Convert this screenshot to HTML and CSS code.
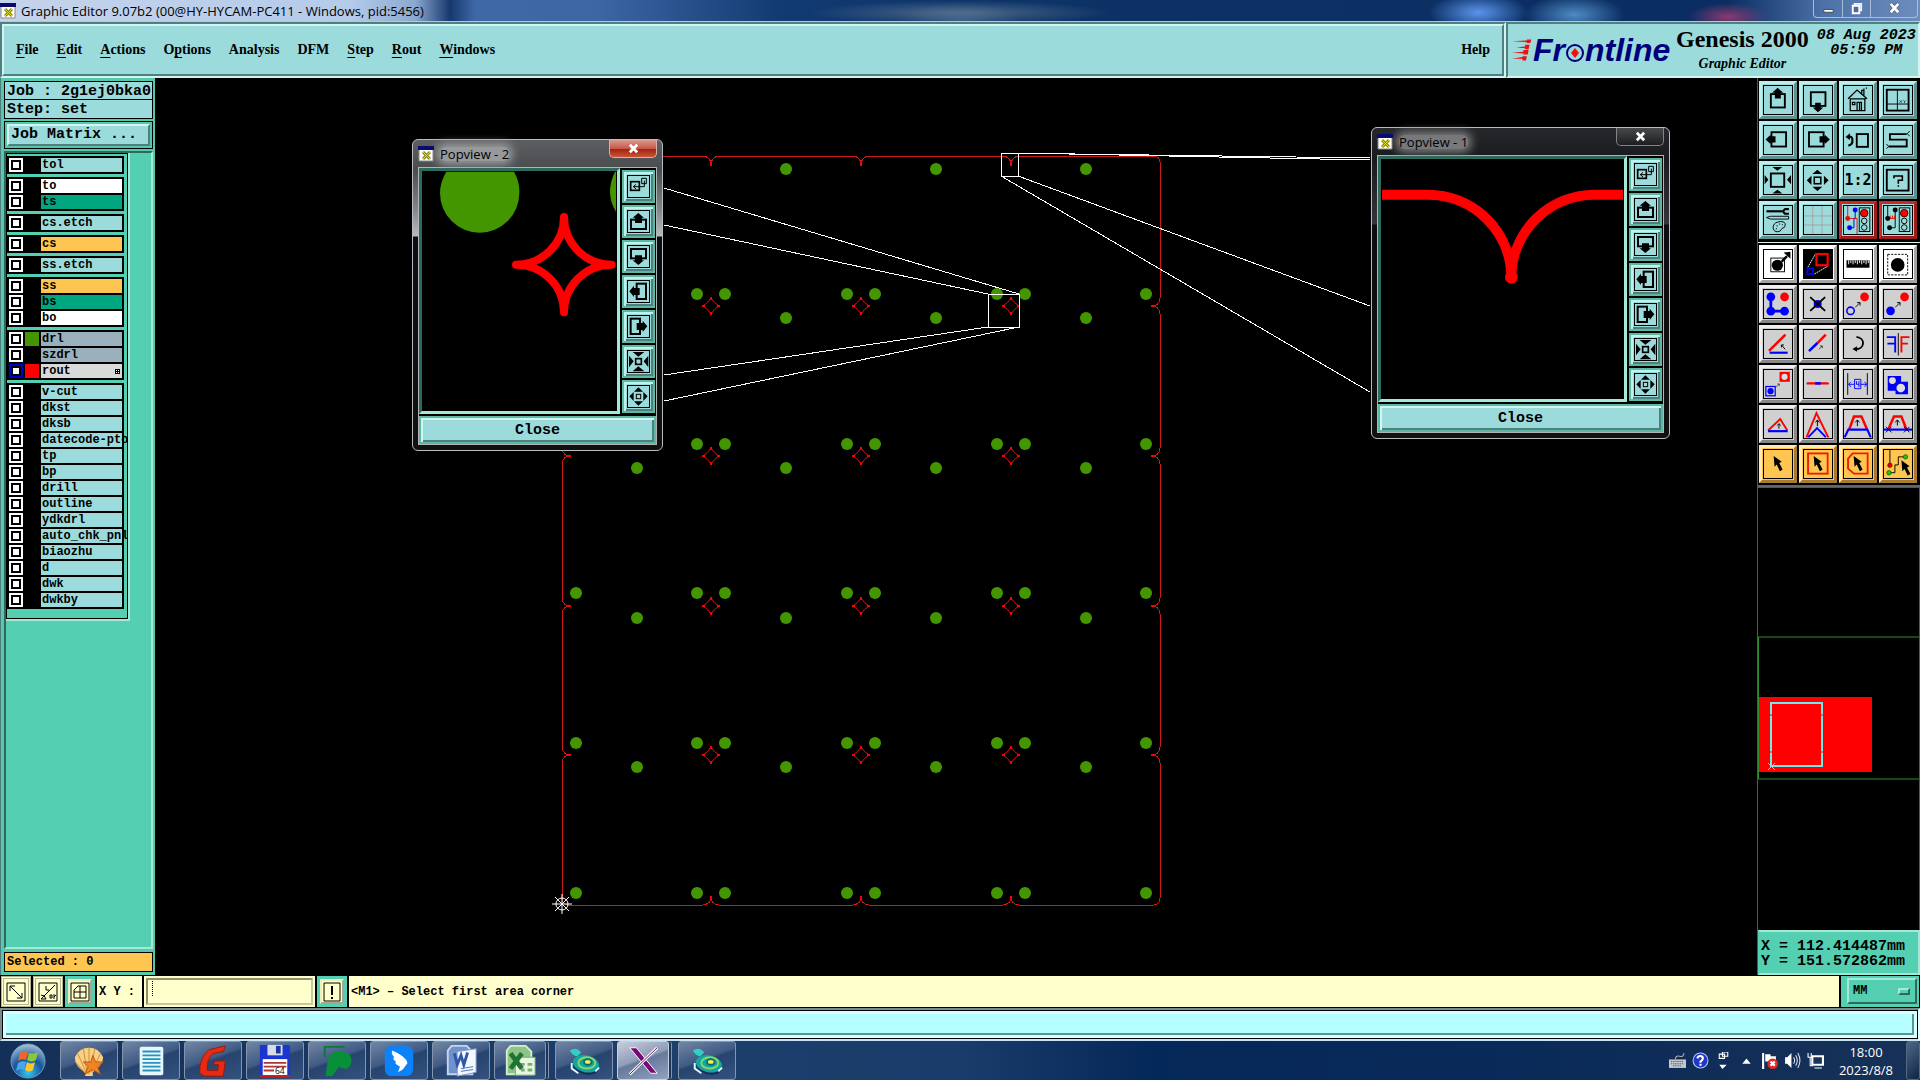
FILE: index.html
```html
<!DOCTYPE html>
<html lang="en">

<head>
    <meta charset="UTF-8">
    <meta name="viewport" content="width=device-width, initial-scale=1.0">
    <title>Graphic Editor 9.07b2</title>
    <link rel="stylesheet" href="styles.css">
</head>

<body>
    <!-- Icon sprite -->
    <svg class="sprite" aria-hidden="true">
        <symbol id="xwin" viewBox="0 0 16 16">
            <path d="M1 1H15V15H1Z" fill="#fff" stroke="#888" />
            <path d="M0 0H16V4H0Z" fill="#0a0a70" />
            <path d="M5 6L12 13M12 6L5 13" stroke="#8a8a10" stroke-width="3" />
            <path d="M5 6L12 13M12 6L5 13" stroke="#e0dc20" stroke-width="1" />
        </symbol>
        <symbol id="cursor" viewBox="0 0 90 90">
            <path d="M31 19L57 38L49 42L60 63L51 68L41 47L34 54Z" />
        </symbol>
        <symbol id="mini-arrow" viewBox="0 0 20 20">
            <path d="M2 18L16 4M7 4H16V13" fill="none" stroke="#000" stroke-width="2.5" />
        </symbol>
        <symbol id="up" viewBox="0 0 90 90">
            <rect x="22" y="26" width="45" height="43" fill="none" stroke="#000" stroke-width="6" />
            <path d="M44 6L62 22H54V40H35V22H26Z" />
        </symbol>
        <symbol id="down" viewBox="0 0 90 90">
            <rect x="22" y="20" width="47" height="44" fill="none" stroke="#000" stroke-width="6" />
            <path d="M45 84L62 69H54V54H36V69H28Z" />
        </symbol>
        <symbol id="left" viewBox="0 0 90 90">
            <rect x="24" y="20" width="47" height="46" fill="none" stroke="#000" stroke-width="6" />
            <path d="M5 43L21 28V33H37V53H21V58Z" />
        </symbol>
        <symbol id="right" viewBox="0 0 90 90">
            <rect x="16" y="20" width="47" height="46" fill="none" stroke="#000" stroke-width="6" />
            <path d="M83 43L67 28V33H50V53H67V58Z" />
        </symbol>
        <symbol id="shrink" viewBox="0 0 90 90">
            <rect x="22" y="24" width="43" height="43" fill="none" stroke="#000" stroke-width="6" />
            <path d="M27 3H59L43 15ZM27 88H59L43 76ZM2 29V59L14 44ZM87 29V59L74 44Z" />
        </symbol>
        <symbol id="grow" viewBox="0 0 90 90">
            <rect x="33" y="36" width="21" height="21" fill="none" stroke="#000" stroke-width="5" />
            <path d="M43 12L59 26H27ZM43 80L59 67H27ZM9 46L24 31V61ZM79 46L64 31V61Z" />
        </symbol>
        <symbol id="p-zoom" viewBox="0 0 63 63">
            <rect x="8" y="17" width="26" height="26" fill="none" stroke="#000" stroke-width="5" />
            <path d="M41 7H55V23H41ZM49 14V32H16M24 25L16 32L24 39" fill="none" stroke="#000" stroke-width="3" />
        </symbol>
        <symbol id="p-up" viewBox="0 0 63 63">
            <rect x="9" y="26" width="45" height="28" fill="none" stroke="#000" stroke-width="6" />
            <path d="M31 6L48 20H42V36H21V20H14Z" />
        </symbol>
        <symbol id="p-down" viewBox="0 0 63 63">
            <rect x="9" y="9" width="45" height="28" fill="none" stroke="#000" stroke-width="6" />
            <path d="M31 57L48 43H42V28H21V43H14Z" />
        </symbol>
        <symbol id="p-left" viewBox="0 0 63 63">
            <rect x="26" y="8" width="28" height="46" fill="none" stroke="#000" stroke-width="6" />
            <path d="M4 31L18 14V21H35V42H18V48Z" />
        </symbol>
        <symbol id="p-right" viewBox="0 0 63 63">
            <rect x="8" y="8" width="28" height="46" fill="none" stroke="#000" stroke-width="6" />
            <path d="M58 31L44 14V21H26V42H44V48Z" />
        </symbol>
        <symbol id="p-shrink" viewBox="0 0 63 63">
            <rect x="23" y="23" width="17" height="17" fill="none" stroke="#000" stroke-width="5" />
            <path d="M14 3H49L31 17ZM14 61H49L31 46ZM3 14V49L17 31ZM61 14V49L47 31Z" />
        </symbol>
        <symbol id="p-grow" viewBox="0 0 63 63">
            <rect x="25" y="25" width="13" height="13" fill="none" stroke="#000" stroke-width="3" />
            <path d="M31 4L45 17H18ZM31 59L45 46H18ZM4 31L17 18V45ZM59 31L46 18V45Z" />
        </symbol>
        <symbol id="star" viewBox="-10 -10 20 20">
            <path d="M0 -8Q3 -3 8 0Q3 3 0 8Q-3 3 -8 0Q-3 -3 0 -8Z" fill="none" stroke="#dc1414" />
            <path d="M-1 -9H1V-6H-1ZM-1 6H1V9H-1ZM-9 -1H-6V1H-9ZM6 -1H9V1H6Z" fill="#f00" />
        </symbol>
        <symbol id="flying" viewBox="0 0 36 36">
            <ellipse cx="20" cy="23" rx="14" ry="9" fill="#1c2858" transform="rotate(15 20 23)" />
            <ellipse cx="20" cy="21" rx="14" ry="9" fill="#11a6a0" transform="rotate(12 20 21)" />
            <ellipse cx="21" cy="20" rx="9" ry="6" fill="none" stroke="#8bd46a" stroke-width="2" />
            <ellipse cx="22" cy="19" rx="4" ry="3" fill="#f0ee4c" stroke="#0a6c70" stroke-width="2" />
            <path d="M3 7Q10 2 15 9L11 13Q6 13 3 7Z" fill="#32cfc8" />
            <path d="M5 20V26L12 31M30 29L34 25" fill="none" stroke="#dff" stroke-width="2" />
        </symbol>
    </svg>

    <!-- Window title -->
    <div class="titlebar">
        <svg class="title-icon"><use href="#xwin" /></svg>
        <span class="title-text">Graphic Editor 9.07b2 (00@HY-HYCAM-PC411 - Windows, pid:5456)</span>
        <div class="window-buttons">
            <button aria-label="Minimize"><svg viewBox="0 0 16 16"><path d="M3 9H13V12H3Z" fill="#fff" stroke="#445" /></svg></button>
            <button aria-label="Restore"><svg viewBox="0 0 16 16"><path d="M6 3H13V10H6Z" fill="none" stroke="#eef" stroke-width="2" /><path d="M4 5H11V13H4Z" fill="#556a90" stroke="#fff" stroke-width="2" /></svg></button>
            <button class="wide" aria-label="Close"><svg viewBox="0 0 16 16"><path d="M4 3L12 12M12 3L4 12" stroke="#445" stroke-width="4" /><path d="M4 3L12 12M12 3L4 12" stroke="#fff" stroke-width="3" /></svg></button>
        </div>
    </div>

    <!-- Menu bar -->
    <header class="header">
        <div class="sunken menu-frame">
            <nav class="raised menu">
                <a href="#"><u>F</u>ile</a>
                <a href="#"><u>E</u>dit</a>
                <a href="#"><u>A</u>ctions</a>
                <a href="#">O<u>p</u>tions</a>
                <a href="#">Analysis</a>
                <a href="#">DFM</a>
                <a href="#"><u>S</u>tep</a>
                <a href="#"><u>R</u>out</a>
                <a href="#"><u>W</u>indows</a>
                <a href="#" class="help">Help</a>
            </nav>
        </div>
        <div class="sunken brand">
            <div class="logo">
                <svg class="logo-speed" viewBox="0 0 24 24"><path d="M0 2L17 1V0H22L21 4H17V3ZM5 9L15 8V6H20L19 11H15V10ZM0 15L13 14V12H19L18 17H13V16ZM0 22L12 20V19H17L16 24H12V22Z" fill="#f01010" /></svg>
                <span>Fr</span>
                <svg class="logo-o" viewBox="0 0 20 20"><circle cx="10" cy="10" r="8" fill="none" stroke="#00007c" stroke-width="2" /><path d="M10 5L14 10L10 15L6 10Z" fill="#f01010" /></svg>
                <span>ntline</span>
            </div>
            <div class="product">
                <h1>Genesis 2000</h1>
                <p>Graphic Editor</p>
            </div>
            <div class="clock">08 Aug 2023<br>05:59 PM</div>
        </div>
    </header>

    <main class="workspace">
        <!-- Layers -->
        <aside class="layers-panel">
            <div class="job-box">Job : 2g1ej0bka0</div>
            <div class="job-box step-box">Step: set</div>
            <div class="matrix-frame"><button class="matrix-btn">Job Matrix ...</button></div>
            <div class="layers-scroll">
                <div class="layers">
                    <div class="group">
                        <label><input type="checkbox"><i></i><span>tol</span></label>
                    </div>
                    <div class="group">
                        <label><input type="checkbox"><i></i><span class="white">to</span></label>
                        <label><input type="checkbox"><i></i><span class="green">ts</span></label>
                    </div>
                    <div class="group">
                        <label><input type="checkbox"><i></i><span>cs.etch</span></label>
                    </div>
                    <div class="group">
                        <label><input type="checkbox"><i></i><span class="gold">cs</span></label>
                    </div>
                    <div class="group">
                        <label><input type="checkbox"><i></i><span>ss.etch</span></label>
                    </div>
                    <div class="group">
                        <label><input type="checkbox"><i></i><span class="gold">ss</span></label>
                        <label><input type="checkbox"><i></i><span class="green">bs</span></label>
                        <label><input type="checkbox"><i></i><span class="white">bo</span></label>
                    </div>
                    <div class="group">
                        <label><input type="checkbox"><i class="drl"></i><span class="gray">drl</span></label>
                        <label><input type="checkbox"><i></i><span class="gray">szdrl</span></label>
                        <label><input type="checkbox" checked><i class="rout"></i><span class="silver">rout<svg class="work-mark" viewBox="0 0 5 5"><path d="M0 0H5V5H0Z" /><path d="M1 1H2V2H1ZM3 1H4V2H3ZM1 3H2V4H1ZM3 3H4V4H3Z" fill="#fff" /></svg></span></label>
                    </div>
                    <div class="group">
                        <label><input type="checkbox"><i></i><span>v-cut</span></label>
                        <label><input type="checkbox"><i></i><span>dkst</span></label>
                        <label><input type="checkbox"><i></i><span>dksb</span></label>
                        <label><input type="checkbox"><i></i><span>datecode-pto</span></label>
                        <label><input type="checkbox"><i></i><span>tp</span></label>
                        <label><input type="checkbox"><i></i><span>bp</span></label>
                        <label><input type="checkbox"><i></i><span>drill</span></label>
                        <label><input type="checkbox"><i></i><span>outline</span></label>
                        <label><input type="checkbox"><i></i><span>ydkdrl</span></label>
                        <label><input type="checkbox"><i></i><span>auto_chk_pnl</span></label>
                        <label><input type="checkbox"><i></i><span>biaozhu</span></label>
                        <label><input type="checkbox"><i></i><span>d</span></label>
                        <label><input type="checkbox"><i></i><span>dwk</span></label>
                        <label><input type="checkbox"><i></i><span>dwkby</span></label>
                    </div>
                </div>
            </div>
            <div class="selected">Selected : 0</div>
        </aside>

        <!-- Drawing area -->
        <section class="canvas">
            <svg class="board" viewBox="155 78 1602 897" preserveAspectRatio="xMinYMin meet">
                <defs>
                    <g id="vpair"><circle cx="-14" r="6" /><circle cx="14" r="6" /></g>
                    <g id="pair-row">
                        <circle cx="576" r="6" /><use href="#vpair" x="711" /><use href="#vpair" x="861" /><use href="#vpair" x="1011" /><circle cx="1146" r="6" />
                    </g>
                    <g id="single-row"><circle cx="637" r="6" /><circle cx="786" r="6" /><circle cx="936" r="6" /><circle cx="1086" r="6" /></g>
                    <g id="star-row">
                        <use href="#star" x="701" y="-10" width="20" height="20" />
                        <use href="#star" x="851" y="-10" width="20" height="20" />
                        <use href="#star" x="1001" y="-10" width="20" height="20" />
                    </g>
                </defs>
                <g fill="#439600">
                    <use href="#single-row" y="169" />
                    <use href="#pair-row" y="294" />
                    <use href="#single-row" y="318" />
                    <use href="#pair-row" y="444" />
                    <use href="#single-row" y="468" />
                    <use href="#pair-row" y="593" />
                    <use href="#single-row" y="618" />
                    <use href="#pair-row" y="743" />
                    <use href="#single-row" y="767" />
                    <use href="#pair-row" y="893" />
                </g>
                <path fill="none" stroke="#c81818" shape-rendering="crispEdges" d="M568 156H703Q711 157 711 165Q711 157 719 156H853Q861 157 861 165Q861 157 869 156H1003Q1011 157 1011 165Q1011 157 1019 156H1154Q1160 157 1160 162
                    V298Q1159 306 1152 306Q1159 306 1160 314V448Q1159 456 1152 456Q1159 456 1160 464V598Q1159 606 1152 606Q1159 606 1160 614V747Q1159 755 1152 755Q1159 755 1160 763V898
                    Q1160 904 1154 905H1019Q1011 904 1011 897Q1011 904 1003 905H869Q861 904 861 897Q861 904 853 905H719Q711 904 711 897Q711 904 703 905H568Q562 904 562 898
                    V763Q563 755 570 755Q563 755 562 747V614Q563 606 570 606Q563 606 562 598V464Q563 456 570 456Q563 456 562 448V314Q563 306 570 306Q563 306 562 298V162Q562 157 568 156Z" />
                <path fill="#f00" d="M710 163H712V166H710ZM860 163H862V166H860ZM1010 163H1012V166H1010ZM710 896H712V899H710ZM860 896H862V899H860ZM1010 896H1012V899H1010ZM1151 305H1154V307H1151ZM1151 455H1154V457H1151ZM1151 605H1154V607H1151ZM1151 754H1154V756H1151ZM568 605H571V607H568ZM568 754H571V756H568ZM568 455H571V457H568Z" />
                <use href="#star-row" y="306" />
                <use href="#star-row" y="456" />
                <use href="#star-row" y="606" />
                <use href="#star-row" y="755" />
                <g fill="none" stroke="#fff" shape-rendering="crispEdges">
                    <path d="M1001 153H1018V176H1001ZM988 294H1019V327H988Z" />
                    <path d="M1018 153L1370 160M1001 153L1370 158M1018 176L1370 306M1001 176L1370 392" />
                    <path d="M664 188L1019 294M664 225L988 294M664 375L988 327M664 401L1019 327" />
                </g>
                <g fill="none" stroke="#fff">
                    <circle cx="562" cy="904" r="6" />
                    <path d="M552 904H572M562 894V914M555 897L569 911M569 897L555 911" />
                </g>
            </svg>

            <div class="popview popview-2">
                <div class="pop-title">
                    <svg class="title-icon"><use href="#xwin" /></svg>
                    <span>Popview - 2</span>
                    <button class="pop-x" aria-label="Close window"><svg viewBox="0 0 12 12"><path d="M2 2L10 10M10 2L2 10" stroke="#fff" stroke-width="3" /></svg></button>
                </div>
                <div class="pop-body">
                    <div class="pop-view">
                        <svg viewBox="0 0 585 720">
                            <g fill="#439600"><path d="M73 2H276Q294 34 292 66A119 119 0 0 1 54 66Q54 34 73 2Z" /><path d="M582 2H579Q563 34 564 66Q566 98 582 122Z" /></g>
                            <path d="M426 138A143 143 0 0 0 569 281A143 143 0 0 0 426 424A143 143 0 0 0 282 281A143 143 0 0 0 426 138Z" fill="none" stroke="#f00" stroke-width="24" stroke-linejoin="round" />
                        </svg>
                    </div>
                    <div class="pop-tools">
                        <button aria-label="Set area"><svg><use href="#p-zoom" /></svg></button>
                        <button aria-label="Pan up"><svg><use href="#p-up" /></svg></button>
                        <button aria-label="Pan down"><svg><use href="#p-down" /></svg></button>
                        <button aria-label="Pan left"><svg><use href="#p-left" /></svg></button>
                        <button aria-label="Pan right"><svg><use href="#p-right" /></svg></button>
                        <button aria-label="Zoom in"><svg><use href="#p-shrink" /></svg></button>
                        <button aria-label="Zoom out"><svg><use href="#p-grow" /></svg></button>
                    </div>
                    <button class="pop-close">Close</button>
                </div>
            </div>

            <div class="popview popview-1">
                <div class="pop-title">
                    <svg class="title-icon"><use href="#xwin" /></svg>
                    <span>Popview - 1</span>
                    <button class="pop-x" aria-label="Close window"><svg viewBox="0 0 12 12"><path d="M2 2L10 10M10 2L2 10" stroke="#fff" stroke-width="3" /></svg></button>
                </div>
                <div class="pop-body">
                    <div class="pop-view">
                        <svg viewBox="0 0 729 720">
                            <path d="M3 107H141A250 250 0 0 1 391 355A250 250 0 0 1 641 107H726" fill="none" stroke="#f00" stroke-width="30" stroke-linejoin="round" />
                            <circle cx="391" cy="355" r="19" fill="#f00" />
                        </svg>
                    </div>
                    <div class="pop-tools">
                        <button aria-label="Set area"><svg><use href="#p-zoom" /></svg></button>
                        <button aria-label="Pan up"><svg><use href="#p-up" /></svg></button>
                        <button aria-label="Pan down"><svg><use href="#p-down" /></svg></button>
                        <button aria-label="Pan left"><svg><use href="#p-left" /></svg></button>
                        <button aria-label="Pan right"><svg><use href="#p-right" /></svg></button>
                        <button aria-label="Zoom in"><svg><use href="#p-shrink" /></svg></button>
                        <button aria-label="Zoom out"><svg><use href="#p-grow" /></svg></button>
                    </div>
                    <button class="pop-close">Close</button>
                </div>
            </div>
        </section>

        <!-- Tools -->
        <aside class="tools-panel">
            <div class="tools">
                <button aria-label="Pan up"><svg><use href="#up" /></svg></button>
                <button aria-label="Pan down"><svg><use href="#down" /></svg></button>
                <button aria-label="Home"><svg viewBox="0 0 90 90"><path d="M13 41L42 13L74 41M20 40V79H67V40M18 41H70M42 79V53H56V79M27 53H35V60H27ZM50 53V79M57 26V14H64V32M62 10H66M70 7H74" fill="none" stroke="#000" stroke-width="4" /></svg></button>
                <button aria-label="Quadrants"><svg viewBox="0 0 90 90"><rect x="9" y="12" width="70" height="67" fill="none" stroke="#000" stroke-width="6" /><path d="M43 12V79M9 58H79" stroke="#000" stroke-width="3" /><path d="M50 46L58 54M58 46L50 54M62 46L66 50L70 46M66 50V55" fill="none" stroke="#000" stroke-width="2" /></svg></button>

                <button aria-label="Pan left"><svg><use href="#left" /></svg></button>
                <button aria-label="Pan right"><svg><use href="#right" /></svg></button>
                <button aria-label="Previous view"><svg viewBox="0 0 90 90"><rect x="41" y="26" width="36" height="41" fill="none" stroke="#000" stroke-width="6" /><path d="M14 34Q28 32 27 46Q28 60 14 63" fill="none" stroke="#000" stroke-width="7" /><path d="M5 35L19 23V45Z" /></svg></button>
                <button aria-label="Serpentine"><svg viewBox="0 0 90 90"><path d="M73 26H19V44H73V66H15" fill="none" stroke="#000" stroke-width="6" /><path d="M73 26L83 16M76 26L83 33M15 66L8 58M15 66L8 73" stroke="#000" stroke-width="3" /></svg></button>

                <button aria-label="Zoom in"><svg><use href="#shrink" /></svg></button>
                <button aria-label="Zoom out"><svg><use href="#grow" /></svg></button>
                <button class="ratio">1:2</button>
                <button aria-label="Help"><svg viewBox="0 0 90 90"><rect x="9" y="12" width="70" height="67" fill="none" stroke="#000" stroke-width="6" /><path d="M32 40V32H59V46H46V57M46 62V67" fill="none" stroke="#000" stroke-width="5" /></svg></button>

                <button aria-label="Setup"><svg viewBox="0 0 90 90"><path d="M8 17H60" stroke="#000" stroke-width="7" /><path d="M80 10H68Q56 17 68 25H80" fill="none" stroke="#000" stroke-width="7" /><path d="M8 37L21 33H79V42H21Z" fill="none" stroke="#000" stroke-width="3" /><path d="M30 64Q34 51 54 50Q70 50 68 62Q68 70 58 72Q52 85 42 83Q26 80 30 64ZM40 64H44M48 58H52M58 60H61M38 73H42" fill="none" stroke="#000" stroke-width="3" /></svg></button>
                <button aria-label="Grid"><svg viewBox="0 0 90 90"><path d="M28 0V90M58 0V90M0 32H90M0 61H90" stroke="#a8a0a4" stroke-width="3" /></svg></button>
                <button class="red" aria-label="Net analysis"><svg viewBox="0 0 90 90"><path d="M12 0V40H42V90" fill="none" stroke="#e01010" stroke-width="3" /><path d="M36 13V40M32 40V70H18" fill="none" stroke="#00c" stroke-width="3" /><circle cx="12" cy="40" r="8" fill="#e01010" /><circle cx="36" cy="13" r="8" fill="#00f" /><circle cx="18" cy="70" r="8" fill="#00f" /><rect x="49" y="6" width="34" height="76" fill="none" stroke="#000" stroke-width="3" /><circle cx="65" cy="23" r="12" fill="#f00" stroke="#300" stroke-width="3" /><circle cx="65" cy="48" r="9" fill="none" stroke="#000" stroke-width="3" /><circle cx="65" cy="69" r="9" fill="none" stroke="#000" stroke-width="3" /></svg></button>
                <button class="red" aria-label="Short analysis"><svg viewBox="0 0 90 90"><path d="M12 0V40M36 13V70H18" fill="none" stroke="#000" stroke-width="3" /><path d="M12 40H36M20 40V31M27 40V31M34 40V31" stroke="#e01010" stroke-width="3" /><circle cx="12" cy="40" r="8" /><circle cx="36" cy="13" r="8" /><circle cx="18" cy="70" r="8" /><rect x="49" y="6" width="34" height="76" fill="none" stroke="#000" stroke-width="3" /><circle cx="65" cy="23" r="12" fill="#f00" stroke="#300" stroke-width="3" /><circle cx="65" cy="48" r="9" fill="none" stroke="#000" stroke-width="3" /><circle cx="65" cy="69" r="9" fill="none" stroke="#000" stroke-width="3" /></svg></button>
            </div>
            <div class="tools edit-tools">
                <button class="white" aria-label="Feature"><svg viewBox="0 0 90 90"><rect x="22" y="26" width="44" height="44" fill="none" stroke="#000" stroke-width="3" /><circle cx="43" cy="49" r="18" /><path d="M57 37L74 20" stroke="#000" stroke-width="8" /><path d="M85 6V28L63 8Z" /></svg></button>
                <button class="white" aria-label="Popview"><svg viewBox="0 0 90 90"><path d="M0 0H90V90H0Z" /><path d="M36 14L12 56M76 52L32 78" stroke="#fff" stroke-width="3" stroke-dasharray="5 2" /><rect x="40" y="13" width="36" height="36" fill="none" stroke="#f00" stroke-width="7" /><rect x="11" y="59" width="18" height="18" fill="none" stroke="#00f" stroke-width="6" /></svg></button>
                <button class="white" aria-label="Measure"><svg viewBox="0 0 90 90"><path d="M8 33H82V57H8Z" /><path d="M15 33V46M22 33V42M29 33V46M36 33V42M43 33V46M50 33V42M57 33V46M64 33V42M71 33V46M78 33V42" stroke="#fff" stroke-width="3" /></svg></button>
                <button class="white" aria-label="Select"><svg viewBox="0 0 90 90"><rect x="12" y="14" width="64" height="66" fill="none" stroke="#000" stroke-width="3" stroke-dasharray="7 4" /><circle cx="44" cy="48" r="22" /></svg></button>

                <button class="gray" aria-label="Add line"><svg viewBox="0 0 90 90"><path d="M22 22V68H66" fill="none" stroke="#00f" stroke-width="9" /><circle cx="22" cy="22" r="14" fill="#00f" /><circle cx="22" cy="68" r="14" fill="#00f" /><circle cx="66" cy="68" r="14" fill="#00f" /><circle cx="66" cy="22" r="14" fill="#f00" /></svg></button>
                <button class="gray" aria-label="Delete"><svg viewBox="0 0 90 90"><circle cx="44" cy="45" r="13" fill="#00e" /><path d="M20 23L68 67M68 23L20 67" stroke="#000" stroke-width="6" /></svg></button>
                <button class="gray" aria-label="Move"><svg viewBox="0 0 90 90"><circle cx="21" cy="67" r="12" fill="none" stroke="#00f" stroke-width="5" /><circle cx="66" cy="22" r="14" fill="#f00" /><use href="#mini-arrow" x="34" y="36" width="22" height="22" /></svg></button>
                <button class="gray" aria-label="Copy"><svg viewBox="0 0 90 90"><circle cx="21" cy="67" r="14" fill="#00f" /><circle cx="66" cy="22" r="14" fill="#f00" /><use href="#mini-arrow" x="34" y="36" width="22" height="22" /></svg></button>

                <button class="gray" aria-label="Rotate line"><svg viewBox="0 0 90 90"><path d="M16 67L69 15" stroke="#f00" stroke-width="8" /><path d="M18 73H76" stroke="#00f" stroke-width="7" /><path d="M68 62L56 48M56 56V48H64" fill="none" stroke="#000" stroke-width="3" /></svg></button>
                <button class="gray" aria-label="Extend line"><svg viewBox="0 0 90 90"><path d="M16 68L44 41" stroke="#00f" stroke-width="8" /><path d="M44 41L70 15" stroke="#f00" stroke-width="8" /><use href="#mini-arrow" x="46" y="48" width="16" height="16" /></svg></button>
                <button class="gray" aria-label="Rotate"><svg viewBox="0 0 90 90"><path d="M40 22C70 26 68 62 36 62" fill="none" stroke="#000" stroke-width="6" /><path d="M27 61L42 52V70Z" /></svg></button>
                <button class="gray" aria-label="Mirror"><svg viewBox="0 0 90 90"><path d="M9 23H36V72M11 44H36" fill="none" stroke="#00f" stroke-width="6" /><path d="M46 10V82" stroke="#000" stroke-width="3" /><path d="M82 23H56V72M56 44H77" fill="none" stroke="#f00" stroke-width="6" /></svg></button>

                <button class="gray" aria-label="Resize"><svg viewBox="0 0 90 90"><rect x="6" y="53" width="30" height="30" fill="none" stroke="#00f" stroke-width="4" /><circle cx="21" cy="68" r="10" fill="#00f" /><path d="M50 6H83V38H50Z" fill="#f00" /><circle cx="66" cy="22" r="10" fill="#ddd" /><use href="#mini-arrow" x="38" y="42" width="14" height="14" /></svg></button>
                <button class="gray" aria-label="Break line"><svg viewBox="0 0 90 90"><path d="M12 43H76" stroke="#f00" stroke-width="8" stroke-linecap="round" /><path d="M36 43H54" stroke="#00f" stroke-width="8" /></svg></button>
                <button class="gray" aria-label="Stretch"><svg viewBox="0 0 90 90"><path d="M12 10V80M75 10V80" stroke="#000" stroke-width="3" /><path d="M15 46H34V30H54V60H34V46M54 46H73M22 38L15 46L22 54M66 38L73 46L66 54M40 36V46H48M48 36V55" fill="none" stroke="#00f" stroke-width="3" /></svg></button>
                <button class="gray" aria-label="Surface"><svg viewBox="0 0 90 90"><path d="M12 19H55V38H77V78H37V67H12Z" fill="#00f" /><circle cx="27" cy="34" r="11" fill="#ddd" /><circle cx="54" cy="58" r="14" fill="#ddd" /></svg></button>

                <button class="gray" aria-label="Move corner"><svg viewBox="0 0 90 90"><path d="M13 66L52 29L75 66" fill="none" stroke="#f00" stroke-width="6" /><path d="M13 68H76" stroke="#00f" stroke-width="7" /><path d="M48 60V44M42 50L48 44L54 50" fill="none" stroke="#000" stroke-width="3" /></svg></button>
                <button class="gray" aria-label="Move apex"><svg viewBox="0 0 90 90"><path d="M8 88L40 10L78 88" fill="none" stroke="#f00" stroke-width="6" /><path d="M14 87L42 58L70 87" fill="none" stroke="#00f" stroke-width="6" /><path d="M43 52V32M37 40L43 32L49 40" fill="none" stroke="#000" stroke-width="3" /></svg></button>
                <button class="gray" aria-label="Move edge"><svg viewBox="0 0 90 90"><path d="M17 62L32 21H56L74 62" fill="none" stroke="#f00" stroke-width="8" /><path d="M2 88L14 63H75L86 88" fill="none" stroke="#00f" stroke-width="7" /><path d="M43 52V32M36 40L43 32L50 40" fill="none" stroke="#000" stroke-width="3" /></svg></button>
                <button class="gray" aria-label="Move edge and cut"><svg viewBox="0 0 90 90"><path d="M14 62L32 21H56L72 62" fill="none" stroke="#f00" stroke-width="8" /><path d="M0 63H90" stroke="#00f" stroke-width="7" /><path d="M43 50V32M36 40L43 32L50 40M6 54L24 72M24 54L6 72M64 54L82 72M82 54L64 72" fill="none" stroke="#000" stroke-width="3" /></svg></button>

                <button class="gold" aria-label="Pointer"><svg><use href="#cursor" /></svg></button>
                <button class="gold" aria-label="Rectangle select"><svg viewBox="0 0 90 90"><rect x="13" y="11" width="63" height="65" fill="none" stroke="#f01c00" stroke-width="6" /><use href="#cursor" width="90" height="90" /></svg></button>
                <button class="gold" aria-label="Polygon select"><svg viewBox="0 0 90 90"><path d="M28 11H76V76H32L13 60V28Z" fill="none" stroke="#f01c00" stroke-width="6" /><use href="#cursor" width="90" height="90" /></svg></button>
                <button class="gold" aria-label="Net select"><svg viewBox="0 0 90 90"><path d="M19 0V49M16 73H35V48H46V22H69" fill="none" stroke="#000" stroke-width="3" /><circle cx="19" cy="49" r="7" fill="#e00" stroke="#400" stroke-width="2" /><circle cx="69" cy="22" r="7" fill="#1c1" stroke="#040" stroke-width="2" /><circle cx="16" cy="73" r="7" fill="#1c1" stroke="#040" stroke-width="2" /><use href="#cursor" x="25" y="14" width="90" height="90" /></svg></button>
            </div>
            <svg class="overview" viewBox="1758 488 161 441" preserveAspectRatio="xMinYMin meet">
                <path d="M1758 697H1872V772H1758Z" fill="#f00" />
                <path d="M1758 637H1919M1758 779H1919" stroke="#2f8f2f" />
                <path d="M1758 637V779" stroke="#2f8f2f" stroke-width="2" />
                <g fill="none" stroke="#6ceeee">
                    <rect x="1771" y="703" width="51" height="63" stroke-width="2" />
                    <path d="M1768 763L1775 770M1775 763L1768 770" />
                </g>
                <path d="M1770 715H1773M1770 752H1773M1820 715H1823M1820 752H1823" stroke="#f00" />
            </svg>
            <div class="coords">X = 112.414487mm<br>Y = 151.572862mm</div>
        </aside>
    </main>

    <!-- Command line -->
    <div class="command">
        <button class="flat" aria-label="Snap off"><svg viewBox="0 0 20 20"><path d="M1 1H19V19H1ZM4 4L16 16M4 9V4H9M16 11V16H11" /></svg></button>
        <button class="flat" aria-label="Angle"><svg viewBox="0 0 20 20"><path d="M1 1H19V19H1ZM3 17L17 3M3 17H8M8 4V8H11M3 13Q7 13 8 17M12 13H14V16H12ZM16 12V17M16 15L18 13" /></svg></button>
        <div class="key"><button aria-label="Grid snap"><svg viewBox="0 0 20 20"><path d="M1 1H19V19H1ZM8 4H16V16H4V8ZM10 4V16M4 10H16" /></svg></button></div>
        <label for="xy">X Y :</label>
        <div class="xy"><input id="xy" type="text"><span class="ibeam"></span></div>
        <div class="key"><button aria-label="Alert"><svg viewBox="0 0 20 20"><path d="M2 1H18V19H2Z" /><path d="M10 4V13M10 15V17" stroke-width="2" /></svg></button></div>
        <output class="prompt">&lt;M1&gt; – Select first area corner</output>
        <div class="units"><select aria-label="Units"><option>MM</option><option>Inch</option></select></div>
    </div>
    <div class="status"><div></div></div>

    <!-- Taskbar -->
    <footer class="taskbar">
        <button class="start" aria-label="Start">
            <svg viewBox="0 0 38 38">
                <defs><radialGradient id="orb" cx="50%" cy="85%" r="85%"><stop offset="0" stop-color="#35c5f0" /><stop offset=".5" stop-color="#17549a" /><stop offset="1" stop-color="#a9c4d8" /></radialGradient></defs>
                <circle cx="19" cy="19" r="17" fill="url(#orb)" stroke="#6b9dbd" />
                <path d="M11 11Q15 8 19 10L17 18Q13 16 9 19Z" fill="#f0662a" />
                <path d="M20 11Q24 13 29 10L27 18Q23 21 18 18Z" fill="#8cc63c" />
                <path d="M9 21Q13 18 17 20L15 28Q11 26 7 29Z" fill="#4aa6ea" />
                <path d="M18 20Q22 23 26 20L24 28Q20 31 16 28Z" fill="#fdc62c" />
            </svg>
        </button>
        <button aria-label="Shell"><svg viewBox="0 0 36 36"><path d="M18 4Q28 4 33 14Q33 22 22 30V34H14V30Q3 24 3 14Q8 4 18 4Z" fill="#f8cf84" /><path d="M18 4V32M12 5L16 30M24 5L20 30M6 10L15 30M30 10L21 30M3 18L14 31" stroke="#d48a30" /><path d="M22 12L25 19L33 19L27 24L30 32L22 27L14 32L17 24L12 19L20 19Z" fill="#ee8424" stroke="#b85810" /></svg></button>
        <button aria-label="Notepad"><svg viewBox="0 0 36 36"><rect x="6" y="3" width="25" height="30" rx="2" fill="#e6f6fc" /><path d="M9 8H28M9 12H28M9 16H28M9 20H28M9 24H28M9 28H28" stroke="#2891bd" stroke-width="2" /></svg></button>
        <button aria-label="G tool"><svg viewBox="0 0 36 36"><path d="M31 2L14 6Q3 14 4 31L9 34H29L31 18H20L18 22H24L23 28H12Q11 16 18 10L29 8Z" fill="#e52c12" stroke="#a51404" /></svg></button>
        <button aria-label="Floppy"><svg viewBox="0 0 36 36"><path d="M2 1H33L34 3V33H2Z" fill="#1a35d0" /><path d="M10 1H26V12H10Z" fill="#d8dce8" /><path d="M19 2H24V10H19Z" fill="#1a35a0" /><path d="M5 16H31V33H5Z" fill="#fff" /><path d="M6 20H30M6 24H30M6 28H17" stroke="#b03434" stroke-width="2" /><path d="M2 33H34V35H2Z" fill="#c02020" /><text x="18" y="32" font-size="9">64</text></svg></button>
        <button aria-label="P tool"><svg viewBox="0 0 36 36"><path d="M5 14V3H26" fill="none" stroke="#0a7a3a" stroke-width="2" /><path d="M8 19Q10 6 23 8Q35 10 33 20Q30 30 20 24L13 34H6Z" fill="#089038" /></svg></button>
        <button aria-label="Messenger"><svg viewBox="0 0 36 36"><rect x="3" y="2" width="30" height="32" rx="7" fill="#0b82fa" /><path d="M11 7Q25 13 27 20L22 27L17 30L19 24Q12 20 15 19Q10 15 13 14Q9 10 11 7Z" fill="#fff" /></svg></button>
        <button aria-label="Word"><svg viewBox="0 0 36 36"><path d="M8 2H24L30 8V32H4V7Z" fill="#6f92cc" stroke="#c4d6f2" stroke-width="2" /><path d="M14 8L34 5V30L14 34Z" fill="#f3f7ff" stroke="#8098c8" /><path d="M11 10L14 22L18 12L21 22L25 9" fill="none" stroke="#2f57a8" stroke-width="3" /><path d="M18 26L31 24M18 29L31 27" stroke="#4c70b8" /></svg></button>
        <button class="stacked" aria-label="Excel"><svg viewBox="0 0 36 36"><path d="M8 2H24L30 8V32H4V7Z" fill="#8fc486" stroke="#d4efce" stroke-width="2" /><path d="M13 14H34V33H13Z" fill="#eaf6e4" stroke="#6ba85c" /><path d="M19 20H23V23H19ZM26 20H31V23H26ZM19 26H23V29H19ZM26 26H31V29H26Z" fill="#78b06c" /><path d="M8 10L20 26M20 10L8 26" stroke="#1f7434" stroke-width="5" /></svg></button>
        <button aria-label="Genesis"><svg><use href="#flying" /></svg></button>
        <button class="stacked active" aria-label="Exceed"><svg viewBox="0 0 36 36"><path d="M4 4H11L33 31H26Z" fill="#780a78" stroke="#fff" /><path d="M33 4L4 32" stroke="#fff" stroke-width="3" /><path d="M33 4L4 32" stroke="#5a0a5a" stroke-width="1" /></svg></button>
        <button aria-label="Genesis editor"><svg><use href="#flying" /></svg></button>
        <div class="tray">
            <svg viewBox="0 0 16 16"><path d="M0 7H16V15H0Z" fill="#c4c8cc" /><path d="M2 9H14M2 11H14M4 13H12" stroke="#444" stroke-dasharray="1 1" /><path d="M6 7Q6 3 10 4T14 1" fill="none" stroke="#aaa" /></svg>
            <svg viewBox="0 0 16 16"><circle cx="8" cy="8" r="7" fill="#2038c8" stroke="#b8c4f4" /><path d="M5 6Q6 3 9 4Q12 6 8 9V10M8 11V13" fill="none" stroke="#fff" stroke-width="2" /></svg>
            <svg viewBox="0 0 16 16"><path d="M7 0H12V4H7ZM4 2H9V6H4Z" fill="#17335c" stroke="#fff" /><path d="M4 12H11L7 16Z" fill="#fff" /></svg>
            <svg viewBox="0 0 16 16"><path d="M4 11H12L8 6Z" fill="#fff" /></svg>
            <svg viewBox="0 0 16 16"><path d="M2 1V16" stroke="#fff" stroke-width="2" /><path d="M4 2H9V4H14V9H4Z" fill="#fff" /><circle cx="11" cy="11" r="5" fill="#e02a20" /><path d="M9 9L13 13M13 9L9 13" stroke="#fff" stroke-width="2" /></svg>
            <svg viewBox="0 0 16 16"><path d="M1 5H3L7 1V15L3 11H1Z" fill="#fff" /><path d="M9 5Q11 8 9 11M11 3Q14 8 11 13M13 1Q17 8 13 15" fill="none" stroke="#dde" /></svg>
            <svg viewBox="0 0 16 16"><path d="M5 4H15V12H5Z" fill="#17335c" stroke="#fff" stroke-width="2" /><path d="M7 15H14M1 1V5H4V1M3 5V13H6" fill="none" stroke="#fff" /></svg>
            <div class="tray-clock">18:00<br>2023/8/8</div>
        </div>
        <button class="show-desktop" aria-label="Show desktop"></button>
    </footer>
</body>

</html>
```
FILE: styles.css
```css
/* Global Styles */

* {
    box-sizing: border-box;
    margin: 0;
    padding: 0;
}

:root {
    --cyan: #9bdbdb;
    --cyan-light: #d2f5f2;
    --cyan-dark: #4e8080;
    --teal: #55cfb1;
    --teal-light: #a5e8d8;
    --teal-dark: #2d695c;
    --cream: #ffffcc;
    --gold: #fec650;
    --mono: "Liberation Mono", "Courier New", monospace;
    --ui: "Open Sans", "Segoe UI", sans-serif;
}

body {
    display: flex;
    flex-direction: column;
    height: 100vh;
    overflow: hidden;
    background-color: #000;
    color: #000;
    font-family: var(--mono);
    font-weight: bold;
    font-size: 12px;
}

button,
input,
select {
    border: none;
    border-radius: 0;
    background: none;
    color: inherit;
    font: inherit;
}

svg {
    display: block;
}

.sprite {
    position: absolute;
    width: 0;
    height: 0;
}

.title-icon {
    width: 16px;
    height: 16px;
    flex: none;
}

/* Title bar */

.titlebar {
    display: flex;
    align-items: center;
    gap: 5px;
    height: 22px;
    flex: none;
    background:
        radial-gradient(ellipse 60px 16px at 50% 90%, #54789c88, transparent),
        radial-gradient(ellipse 150px 12px at 50% 60%, #6c7f94aa, transparent),
        radial-gradient(ellipse 50px 20px at 77% 60%, #5b94ec, transparent),
        radial-gradient(ellipse 50px 20px at 82% 70%, #4f8ac4, transparent),
        radial-gradient(ellipse 40px 14px at 90% 80%, #8a3a70, transparent),
        linear-gradient(90deg, #c5d3ea 0, #b4cbea 350px, #8ba8cf 415px, #16386f 450px, #3f68a6 475px, #3c66a4 600px, #123a72 780px, #0c3265 1100px, #0a2d62 90%, #4c72a8 95%, #6d8dbc 100%);
    border-bottom: 1px solid #b6c6dc;
}

.title-text {
    flex: 1;
    font: 13px/20px var(--ui);
}

.window-buttons {
    display: flex;
    height: 18px;
    align-self: flex-start;
    margin-right: 2px;
    border: 1px solid #a9bcd8;
    border-top: none;
    border-radius: 0 0 4px 4px;
}

.window-buttons button {
    display: grid;
    place-items: center;
    width: 28px;
}

.window-buttons button + button {
    border-left: 1px solid #a9bcd8;
}

.window-buttons .wide {
    width: 47px;
}

.window-buttons svg {
    width: 15px;
    height: 15px;
}

/* Header */

.sunken {
    border: 2px solid;
    border-color: var(--cyan-dark) var(--cyan-light) var(--cyan-light) var(--cyan-dark);
    background-color: var(--cyan);
}

.raised {
    border: 2px solid;
    border-color: var(--cyan-light) var(--cyan-dark) var(--cyan-dark) var(--cyan-light);
    background-color: var(--cyan);
}

.header {
    display: flex;
    height: 56px;
    flex: none;
    font-family: "Liberation Serif", "Times New Roman", serif;
}

.menu-frame {
    flex: 1;
    display: flex;
}

.menu {
    flex: 1;
    display: flex;
    align-items: center;
    gap: 18px;
    padding: 0 12px;
    font-size: 14px;
}

.menu a {
    color: #000;
    text-decoration: none;
}

.menu u {
    text-underline-offset: 3px;
}

.menu .help {
    margin-left: auto;
}

.brand {
    display: flex;
    align-items: flex-start;
    width: 414px;
    padding: 1px 0 0 4px;
}

.logo {
    display: flex;
    align-items: center;
    height: 50px;
    color: #00007c;
    font: italic bold 32px/50px "Liberation Sans", Arial, sans-serif;
}

.logo-speed {
    width: 21px;
    height: 24px;
}

.logo-o {
    width: 20px;
    height: 20px;
    margin-top: 6px;
}

.product {
    width: 144px;
    text-align: center;
}

.product h1 {
    font-size: 24px;
    line-height: 28px;
}

.product p {
    font-size: 14px;
    font-style: italic;
    line-height: 22px;
}

.clock {
    flex: 1;
    font: italic bold 15px/15px var(--mono);
    padding-top: 3px;
    text-align: center;
    white-space: nowrap;
}

/* Layers */

.workspace {
    display: flex;
    flex: 1;
    min-height: 0;
}

.layers-panel {
    display: flex;
    flex-direction: column;
    width: 155px;
    padding: 3px 2px 3px 3px;
    background-color: #58c8ad;
    border-left: 1px solid #4e8080;
}

.job-box {
    height: 19px;
    padding-left: 2px;
    border: 1px solid #000;
    background-color: var(--cyan);
    font-size: 15px;
    line-height: 19px;
    white-space: nowrap;
}

.step-box {
    border-top: none;
}

.matrix-frame {
    margin-top: 2px;
    padding: 2px;
    border: 1px solid #000;
}

.matrix-btn {
    display: block;
    width: 100%;
    height: 22px;
    border: 2px solid;
    border-color: var(--cyan-light) var(--cyan-dark) var(--cyan-dark) var(--cyan-light);
    background-color: var(--cyan);
    font-size: 15px;
    line-height: 18px;
    text-align: left;
    padding-left: 2px;
}

.layers-scroll {
    flex: 1;
    min-height: 0;
    margin: 2px 0 3px;
    border: 2px solid;
    border-color: var(--teal-dark) var(--teal-light) var(--teal-light) var(--teal-dark);
    background-color: var(--teal);
}

.layers {
    display: flex;
    flex-direction: column;
    gap: 3px;
    width: 122px;
    padding: 2px 2px 9px 0;
    border: 1px solid #000;
    box-shadow: 1px 1px 0 1px var(--teal-light);
    overflow: hidden;
}

.group {
    display: flex;
    flex-direction: column;
    gap: 2px;
    width: 117px;
    padding: 2px;
    background-color: #000;
}

.group label {
    display: flex;
    gap: 2px;
    height: 14px;
}

.group input {
    appearance: none;
    flex: none;
    width: 14px;
    height: 14px;
    border: 2px solid #fff;
    background-color: #fff;
    box-shadow: inset 0 0 0 2px #000;
}

.group input:checked {
    border-color: #0000c8;
}

.group i {
    flex: none;
    width: 14px;
}

.group .drl {
    background-color: #439600;
}

.group .rout {
    background-color: #f00;
}

.group span {
    display: flex;
    align-items: center;
    justify-content: space-between;
    width: 81px;
    padding: 0 2px 0 1px;
    background-color: var(--cyan);
    line-height: 14px;
    white-space: nowrap;
}

.group .white {
    background-color: #fff;
}

.group .green {
    background-color: #00a680;
}

.group .gold {
    background-color: var(--gold);
}

.group .gray {
    background-color: #9ab1bd;
}

.group .silver {
    background-color: #d9d9d9;
}

.work-mark {
    width: 5px;
    height: 5px;
}

.selected {
    height: 20px;
    padding-left: 2px;
    border: 1px solid #000;
    background-color: var(--gold);
    line-height: 18px;
}

/* Drawing area */

.canvas {
    position: relative;
    flex: 1;
    overflow: hidden;
    background-color: #000;
}

.board {
    width: 100%;
}

.popview {
    position: absolute;
    width: 251px;
    padding: 0 5px 5px;
    border: 1px solid #b8bcc0;
    border-radius: 6px;
    background: linear-gradient(180deg, #5c5f62 0, #4a4c4e 30px, #85888a 70px, #b8babc 96px, #0b0d10 97px, #111 100%);
}

.popview-2 {
    left: 257px;
    top: 61px;
}

.popview-1 {
    left: 1216px;
    top: 49px;
    width: 299px;
    background: linear-gradient(180deg, #27282b 0, #1a1b1e 30px, #33353a 96px, #0b0d10 97px, #111 100%);
}

.pop-title {
    display: flex;
    align-items: center;
    gap: 6px;
    height: 27px;
    font: 13px/14px var(--ui);
}

/* soft glow behind the caption */
.pop-title span {
    margin-right: auto;
    border-radius: 6px;
    background-color: #97999b;
    box-shadow: 0 0 8px 4px #97999b;
}

.popview-1 .pop-title span {
    background-color: #77787a;
    box-shadow: 0 0 8px 4px #77787a;
}

.pop-title .title-icon {
    z-index: 1;
}

.pop-x {
    display: grid;
    place-items: center;
    align-self: flex-start;
    width: 48px;
    height: 18px;
    border: 1px solid #d8b0a8;
    border-top: none;
    border-radius: 0 0 5px 5px;
    background: linear-gradient(180deg, #d99a8e 0, #c8584a 50%, #a02010 52%, #cc5436 100%);
}

.popview-1 .pop-x {
    border-color: #808488;
    background: linear-gradient(180deg, #48494c, #1d1e20);
}

.pop-x svg {
    width: 11px;
    height: 11px;
}

.pop-body {
    display: grid;
    grid-template-columns: 1fr 34px;
    border: 1px solid #b0b4b4;
    background-color: #000;
}

.pop-view {
    margin: 0 2px 1px 0;
    border: 3px solid;
    border-color: var(--teal-dark) var(--teal-light) var(--teal-light) var(--teal-dark);
    background-color: #000;
}

.pop-view svg {
    width: 100%;
}

.pop-tools {
    display: flex;
    flex-direction: column;
    gap: 2px;
    padding-top: 2px;
}

.pop-tools button {
    display: grid;
    place-items: center;
    width: 33px;
    height: 33px;
    border: 2px solid #5cb8a0;
    background-color: var(--cyan);
    box-shadow: inset 2px 2px 0 #b9f5ee, inset -2px -2px 0 var(--cyan-dark);
}

.pop-tools svg {
    width: 21px;
    height: 21px;
    outline: 1px solid #000;
}

.pop-close {
    grid-column: 1 / -1;
    height: 28px;
    margin-top: 1px;
    border: 2px solid #5cb8a0;
    background-color: var(--cyan);
    box-shadow: inset 2px 2px 0 var(--cyan-light), inset -2px -2px 0 var(--cyan-dark);
    font-size: 15px;
}

/* Tools */

.tools-panel {
    display: flex;
    flex-direction: column;
    width: 163px;
    border-left: 1px solid var(--teal-dark);
}

.tools {
    display: grid;
    grid-template-columns: repeat(4, 38px);
    gap: 2px;
    padding: 3px 0 3px 1px;
    border-bottom: 1px solid var(--cyan-light);
}

.edit-tools {
    padding: 2px 0 2px 1px;
    border-bottom: 2px solid #626868;
}

.tools button {
    display: grid;
    place-items: center;
    width: 38px;
    height: 38px;
    border: 3px solid;
    border-color: #bdeeea #5d9292 #5d9292 #bdeeea;
    background-color: var(--cyan);
}

.tools svg {
    width: 28px;
    height: 28px;
    outline: 1px solid #000;
}

.tools .ratio {
    font: bold 15px "DejaVu Sans Mono", monospace;
    outline: 1px solid #000;
    outline-offset: -5px;
}

.tools .red {
    border-color: #cc2a2a #9c1c1c #9c1c1c #cc2a2a;
}

.tools .white {
    border-color: #fff #a4a4a4 #a4a4a4 #fff;
    background-color: #fff;
}

.tools .gray {
    border-color: #efefef #888 #888 #efefef;
    background-color: #d0d0d0;
}

.tools .gold {
    border-color: #ffe9b4 #a97c2c #a97c2c #ffe9b4;
    background-color: var(--gold);
}

.overview {
    flex: 1;
    min-height: 0;
    width: 100%;
    border: 1px solid var(--teal-dark);
    border-width: 1px 1px 0 0;
}

.coords {
    height: 45px;
    padding: 7px 0 0 1px;
    border: 2px solid;
    border-color: var(--teal-light) var(--teal-light) var(--teal-light) var(--teal);
    background-color: var(--teal);
    font-size: 15px;
    line-height: 15px;
    white-space: nowrap;
}

/* Command line */

.command {
    display: flex;
    gap: 2px;
    height: 33px;
    flex: none;
    padding: 1px;
}

.command > * {
    background-color: var(--cream);
}

.command button {
    display: grid;
    place-items: center;
    border: 2px solid;
    border-color: #eeeebc #a8a888 #a8a888 #eeeebc;
    background-color: var(--cream);
}

.command svg {
    width: 20px;
    height: 20px;
    fill: none;
    stroke: #000;
}

.command .flat {
    width: 30px;
    border: 3px double #b4b48e;
}

.command .key {
    display: grid;
    width: 30px;
    padding: 3px;
    background-color: var(--teal);
}

.command label {
    width: 45px;
    padding-left: 2px;
    line-height: 32px;
    white-space: nowrap;
}

.xy {
    position: relative;
    display: flex;
    width: 171px;
    padding: 2px;
}

.xy input {
    width: 100%;
    padding-left: 6px;
    border: 2px solid;
    border-color: #8e8e70 #c8c8a4 #c8c8a4 #8e8e70;
}

.ibeam {
    position: absolute;
    left: 8px;
    top: 5px;
    height: 15px;
    border-left: 1px dotted #000;
}

.prompt {
    flex: 1;
    padding-left: 2px;
    line-height: 32px;
}

.command .units {
    position: relative;
    width: 78px;
    padding: 2px 2px 3px 6px;
    background-color: var(--teal);
}

.units select {
    appearance: none;
    width: 100%;
    height: 100%;
    padding-left: 4px;
    border: 2px solid;
    border-color: var(--teal-light) var(--teal-dark) var(--teal-dark) var(--teal-light);
}

.units::after {
    content: "";
    position: absolute;
    right: 9px;
    top: 12px;
    box-sizing: border-box;
    width: 12px;
    height: 7px;
    border: 2px solid;
    border-color: var(--teal-light) var(--teal-dark) var(--teal-dark) var(--teal-light);
}

.status {
    height: 33px;
    flex: none;
    padding: 1px;
    border: 2px solid;
    border-color: #748c8c #e0ffff #c8e4f4 #748c8c;
    background-color: #000;
}

.status div {
    height: 27px;
    border: 3px solid #d8ffff;
    background-color: #b4ffff;
    box-shadow: inset -2px -2px 0 #5c9494;
}

/* Taskbar */

.taskbar {
    display: flex;
    gap: 4px;
    height: 39px;
    flex: none;
    background: linear-gradient(90deg, #142f58 0, #1d3f6c 35%, #1a3c6a 50%, #05285a 60%, #0a2a58 80%, #173257 100%);
    font-family: var(--ui);
    font-weight: normal;
}

.taskbar button {
    display: grid;
    place-items: center;
    width: 58px;
    border: 1px solid #8694ac;
    border-radius: 3px;
    background: linear-gradient(160deg, #7486a4 0, #3f5a84 45%, #27446f 50%, #34527e 100%);
}

.taskbar button svg {
    width: 34px;
    height: 34px;
}

.taskbar .start {
    width: 56px;
    border: none;
    background: none;
}

.taskbar .start svg {
    width: 38px;
    height: 38px;
}

.taskbar .stacked {
    width: 52px;
    margin-right: 5px;
    box-shadow: 3px 0 0 -1px #1d3459, 4px 0 0 -1px #8694ac;
}

.taskbar .active {
    background: linear-gradient(160deg, #c8cedb 0, #8f9db8 45%, #66799c 50%, #93a2bf 100%);
    border-color: #c8d0de;
}

.tray {
    display: flex;
    align-items: center;
    gap: 6px;
    margin-left: auto;
    color: #fff;
    font-size: 13px;
    line-height: 18px;
}

.tray svg {
    width: 17px;
    height: 17px;
}

.tray-clock {
    width: 72px;
    text-align: center;
}

.taskbar .show-desktop {
    width: 14px;
    background: linear-gradient(135deg, #506888, #0e2444);
    border-color: #56687f;
}
```
